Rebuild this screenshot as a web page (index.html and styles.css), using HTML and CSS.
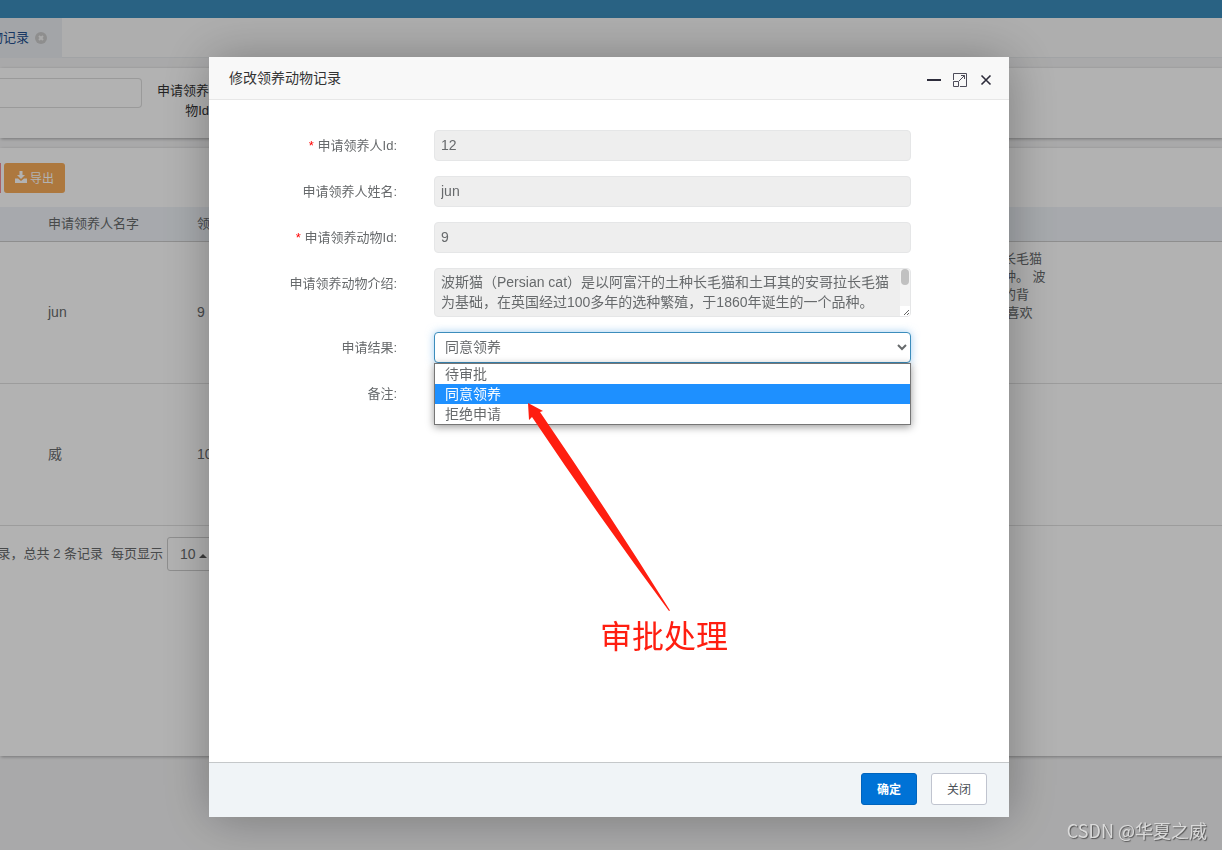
FILE: index.html
```
<!DOCTYPE html>
<html lang="zh-CN">

<head>
	<meta charset="UTF-8">
	<meta name="viewport" content="width=device-width, initial-scale=1.0">
	<title>修改领养动物记录</title>
	<link rel="stylesheet" href="styles.css">
</head>

<body>

	<!-- Page behind the dialog -->
	<div class="page">
		<header class="topbar"></header>
		<nav class="tabs">
			<a class="tab" href="#">物记录
				<svg width="12" height="12" viewBox="0 0 12 12">
					<circle cx="6" cy="6" r="6" fill="#ccc" />
					<path d="M4 4l4 4M8 4l-4 4" stroke="#f4f4f4" stroke-width="2" />
				</svg>
			</a>
		</nav>

		<main class="content">
			<section class="panel search">
				<input class="search-input" type="text" aria-label="申请领养人">
				<label class="search-label" for="animalId">申请领养动<br>物Id：</label>
				<input class="search-input" type="text" id="animalId">
			</section>

			<section class="panel records">
				<div class="toolbar">
					<button class="btn-danger" type="button" aria-label="删除"></button>
					<button class="btn-export" type="button">
						<svg width="12" height="12" viewBox="0 0 12 12" fill="#fff">
							<path d="M4.500 0h3v4H10L6 8 2 4h2.500zM0 7.500h3L6 10l3-2.500h3V12H0z" />
						</svg>
						导出
					</button>
				</div>
				<table class="table">
					<thead>
						<tr>
							<th class="col-check"></th>
							<th class="col-name">申请领养人名字</th>
							<th class="col-animal">领养动物</th>
							<th></th>
						</tr>
					</thead>
					<tbody>
						<tr>
							<td></td>
							<td>jun</td>
							<td>9</td>
							<td class="intro">长毛猫<br>种。 波<br>的背<br>&nbsp;喜欢</td>
						</tr>
						<tr>
							<td></td>
							<td>威</td>
							<td>10</td>
							<td></td>
						</tr>
					</tbody>
				</table>
				<div class="pager">
					<span class="pager-total">录，总共 2 条记录</span>
					<span>每页显示</span>
					<button class="page-size" type="button">10 <i class="caret"></i></button>
				</div>
			</section>
		</main>
	</div>

	<!-- Dialog -->
	<div class="shade">
		<div class="dialog" role="dialog" aria-labelledby="dialogTitle">
			<div class="dialog-title">
				<span id="dialogTitle">修改领养动物记录</span>
				<div class="dialog-tools">
					<button type="button" aria-label="最小化">
						<svg width="14" height="14" viewBox="0 0 14 14">
							<path d="M0 7h14" stroke="#2d2c3b" stroke-width="2" />
						</svg>
					</button>
					<button type="button" aria-label="最大化">
						<svg width="14" height="14" viewBox="0 0 14 14" fill="none" stroke="#4d4c59">
							<path d="M.5 7V.5h13v13H7M.5 8.500h5v5h-5zM6 8l5.500-5.500M8 2.500h3.500V6" />
						</svg>
					</button>
					<button type="button" aria-label="关闭窗口">
						<svg width="14" height="14" viewBox="0 0 14 14">
							<path d="M2.500 2.500l9 9M11.500 2.500l-9 9" stroke="#2d2c3b" stroke-width="1.600" />
						</svg>
					</button>
				</div>
			</div>

			<form class="form">
				<label for="userId"><span class="required">*</span> 申请领养人Id:</label>
				<input class="field" type="text" id="userId" value="12" readonly>

				<label for="userName">申请领养人姓名:</label>
				<input class="field" type="text" id="userName" value="jun" readonly>

				<label for="petId"><span class="required">*</span> 申请领养动物Id:</label>
				<input class="field" type="text" id="petId" value="9" readonly>

				<label for="petIntro">申请领养动物介绍:</label>
				<div class="field area">
					<textarea class="area-text" id="petIntro" readonly>波斯猫（Persian cat）是以阿富汗的土种长毛猫和土耳其的安哥拉长毛猫为基础，在英国经过100多年的选种繁殖，于1860年诞生的一个品种。</textarea>
					<div class="scrollbar">
						<div class="scrollbar-thumb"></div>
						<svg class="resizer" width="10" height="10" viewBox="0 0 10 10">
							<path d="M0 0h10v10H0z" fill="#fff" />
							<path d="M4 9l5-5M7 9l2-2" stroke="#666" />
						</svg>
					</div>
				</div>

				<label for="result">申请结果:</label>
				<div class="select-wrap">
					<select class="field select" id="result">
						<option>待审批</option>
						<option selected>同意领养</option>
						<option>拒绝申请</option>
					</select>
					<ul class="options" role="listbox" aria-label="申请结果">
						<li role="option">待审批</li>
						<li role="option" class="active" aria-selected="true">同意领养</li>
						<li role="option">拒绝申请</li>
					</ul>
				</div>

				<label for="remark">备注:</label>
				<textarea class="field remark" id="remark"></textarea>
			</form>

			<!-- Arrow and note over the form -->
			<svg class="note-arrow" width="144" height="210" viewBox="0 0 144 210" fill="#ff1e10">
				<path d="M0 0L15 8 12 9Q79 107 142 207.500L141 208Q69 111 4 14L1 17z" />
			</svg>
			<span class="note-text">审批处理</span>

			<div class="dialog-footer">
				<button class="btn btn-primary" type="button">确定</button>
				<button class="btn" type="button">关闭</button>
			</div>
		</div>
	</div>

	<div class="watermark">CSDN @华夏之威</div>

</body>

</html>
```
FILE: styles.css
```
* {
	box-sizing: border-box;
}

body {
	margin: 0;
	font-family: "Liberation Sans", "Noto Sans CJK SC", sans-serif;
	font-size: 13px;
	line-height: 20px;
	color: #676a6c;
	background-color: #f3f3f4;
}

button,
input,
select,
textarea {
	font-family: inherit;
	color: inherit;
}

.page {
	height: 100vh;
	overflow: hidden;
}

.topbar {
	height: 18px;
	background-color: #3c8dbc;
}

.tabs {
	height: 40px;
	background-color: #fafafa;
	border-bottom: 1px solid #e7eaec;
}

.tab {
	display: flex;
	align-items: center;
	justify-content: flex-end;
	gap: 6px;
	width: 62px;
	height: 40px;
	padding-right: 15px;
	white-space: nowrap;
	text-decoration: none;
	color: #23508e;
	background-color: #eaedf1;
}

.tab svg {
	flex-shrink: 0;
}

.content {
	display: flex;
	flex-direction: column;
	gap: 10px;
	padding-top: 10px;
}

.panel {
	background-color: #fff;
	box-shadow: 1px 1px 3px rgba(0, 0, 0, 0.3);
}

.search {
	display: flex;
	align-items: flex-start;
	height: 70px;
	padding-top: 10px;
}

.search-input {
	width: 142px;
	height: 30px;
	border: 1px solid #ddd;
	border-left: 0;
	border-radius: 0 4px 4px 0;
}

.search-label {
	width: 80px;
	padding-top: 3px;
	text-align: right;
	color: #333;
	white-space: nowrap;
}

.records {
	height: 608px;
}

.toolbar {
	display: flex;
	gap: 3px;
	padding: 15px 0 14px;
}

.btn-danger,
.btn-export {
	height: 30px;
	padding: 0;
	border: 0;
	color: #fff;
}

.btn-danger {
	width: 1px;
	background-color: #f28b96;
}

.btn-export {
	display: flex;
	align-items: center;
	justify-content: center;
	gap: 3px;
	width: 61px;
	padding-bottom: 2px;
	border-radius: 3px;
	font-size: 12px;
	background-color: #f8ac59;
}

.table {
	width: 100%;
	table-layout: fixed;
	border-collapse: collapse;
}

.table th {
	height: 34px;
	padding: 0 8px;
	text-align: left;
	font-weight: normal;
	background-color: #eff3f8;
	border-bottom: 1px solid #ccc;
}

.table td {
	height: 142px;
	padding: 8px;
	font-size: 14px;
	border-bottom: 1px solid #e0e0e0;
}

.table .intro {
	font-size: 13px;
	line-height: 18px;
	vertical-align: top;
}

.col-check {
	width: 40px;
}

.col-name {
	width: 149px;
}

.col-animal {
	width: 806px;
}

.pager {
	display: flex;
	align-items: center;
	gap: 4px;
	height: 34px;
	margin-top: 11px;
}

.pager-total {
	display: flex;
	justify-content: flex-end;
	width: 103px;
	margin-right: 4px;
	white-space: nowrap;
}

.page-size {
	width: 56px;
	height: 34px;
	padding: 0 12px;
	font-size: 14px;
	text-align: left;
	white-space: nowrap;
	background-color: #fff;
	border: 1px solid #ccc;
	border-radius: 3px;
}

.caret {
	display: inline-block;
	vertical-align: 1px;
	border: 4px solid transparent;
	border-top: 0;
	border-bottom-color: #555;
}

/* Dialog */
.shade {
	position: fixed;
	inset: 0;
	display: flex;
	justify-content: center;
	align-items: flex-end;
	padding: 0 4px 33px 0;
	background-color: rgba(0, 0, 0, 0.3);
}

.dialog {
	position: relative;
	display: flex;
	flex-direction: column;
	width: 800px;
	height: calc(100vh - 90px);
	background-color: #fff;
	border-radius: 2px 2px 0 0;
	box-shadow: 1px 1px 50px rgba(0, 0, 0, 0.3);
}

.dialog-title {
	display: flex;
	align-items: center;
	justify-content: space-between;
	height: 43px;
	padding: 0 16px 0 20px;
	font-size: 14px;
	color: #333;
	background-color: #f8f8f8;
	border-bottom: 1px solid #e7e7e7;
}

.dialog-tools {
	display: flex;
	gap: 12px;
	padding-top: 3px;
}

.dialog-tools button {
	display: flex;
	padding: 0;
	border: 0;
	background: none;
}

.form {
	display: grid;
	grid-template-columns: 188px 1fr;
	align-items: start;
	gap: 15px 37px;
	flex: 1;
	align-content: start;
	padding: 30px 98px 0 0;
}

.form label {
	padding-top: 6px;
	text-align: right;
	white-space: nowrap;
}

.required {
	color: #f00;
}

.field {
	display: block;
	width: 100%;
	height: 31px;
	padding: 2px 6px 4px;
	font-size: 14px;
	line-height: 20px;
	border: 1px solid #e5e6e7;
	border-radius: 4px;
	background-color: #eee;
	outline: none;
}

.area {
	display: flex;
	gap: 6px;
	height: 49px;
	padding: 0 0 0 6px;
	overflow: hidden;
}

.area-text {
	flex: 1;
	height: 40px;
	margin-top: 3px;
	padding: 0;
	font-size: 14px;
	line-height: 20px;
	border: 0;
	outline: none;
	resize: none;
	background: none;
}

.scrollbar {
	display: flex;
	flex-direction: column;
	justify-content: space-between;
	width: 10px;
	background-color: #f3f3f3;
}

.scrollbar-thumb {
	width: 8px;
	height: 16px;
	margin: 0 1px;
	border-radius: 4px;
	background-color: #c1c1c1;
}

.select-wrap {
	position: relative;
}

.select {
	background-color: #fff;
	border-color: #3c8dbc;
	box-shadow: 0 0 8px rgba(102, 175, 233, 0.6);
}

.options {
	position: absolute;
	top: 100%;
	left: 0;
	right: 0;
	z-index: 1;
	margin: 0;
	padding: 0;
	list-style: none;
	font-size: 14px;
	background-color: #fff;
	border: 1px solid #767676;
	box-shadow: 0 2px 8px rgba(0, 0, 0, 0.4);
}

.options li {
	height: 20px;
	padding: 0 10px;
}

.options .active {
	color: #fff;
	background-color: #1e90ff;
}

.remark {
	height: 40px;
	resize: none;
	background-color: #fff;
}

.note-arrow {
	position: absolute;
	top: 346px;
	left: 319px;
	z-index: 2;
}

.note-text {
	position: absolute;
	top: 560px;
	left: 391px;
	font-size: 32px;
	line-height: 40px;
	color: #ff1e10;
}

.dialog-footer {
	display: flex;
	justify-content: flex-end;
	gap: 14px;
	height: 55px;
	padding: 10px 22px;
	background-color: #f0f4f7;
	border-top: 1px solid #c5c8ca;
}

.btn {
	width: 56px;
	height: 32px;
	padding: 0 0 2px;
	font-size: 12px;
	color: #4a5056;
	background-color: #fff;
	border: 1px solid #c0c4cf;
	border-radius: 3px;
}

.btn-primary {
	font-weight: bold;
	color: #fff;
	background-color: #0072d6;
	border-color: #0064bd;
}

.watermark {
	position: fixed;
	right: 15px;
	bottom: 9px;
	font-family: "Noto Sans CJK SC", sans-serif;
	font-size: 18px;
	line-height: 22px;
	color: #dadada;
	text-shadow: 1px 1px 1px #555;
}
```
